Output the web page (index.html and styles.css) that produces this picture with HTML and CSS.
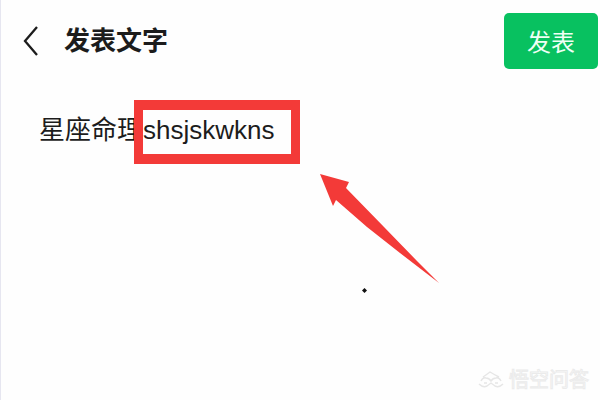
FILE: index.html
```html
<!DOCTYPE html>
<html lang="zh-CN">
<head>
<meta charset="utf-8">
<meta name="viewport" content="width=device-width, initial-scale=1">
<title>发表文字</title>
<link rel="stylesheet" href="styles.css">
</head>
<body>
<header class="bar">
  <button class="back" type="button" aria-label="返回">
    <svg width="16" height="30" viewBox="0 0 16 30" aria-hidden="true"><path d="M14 1 2 15 14 29" fill="none" stroke="#1c1c1c" stroke-width="2.3"/></svg>
  </button>
  <h1 class="title">发表文字</h1>
  <button class="publish" type="button">发表</button>
</header>
<main class="editor">
  <textarea class="text" aria-label="正文" rows="2" spellcheck="false">星座命理shsjskwkns</textarea>
  <div class="mark-box"></div>
  <svg class="mark-arrow" width="120" height="110" viewBox="0 0 120 110" aria-hidden="true"><path d="M0 0 29 8 26 14 64 53 97 87 119 109 80 79 47 53 16 26 13 32Z" fill="#f33a38"/></svg>
  <svg class="mark-dot" width="5" height="5" viewBox="0 0 5 5" aria-hidden="true"><path d="M2.5 0 5 2.5 2.5 5 0 2.5Z" fill="#111"/></svg>
</main>
<footer class="watermark">
  <svg width="26" height="20" viewBox="0 0 26 20" fill="none" stroke="#e6e6e6" stroke-width="1.4" aria-hidden="true"><path d="M5 7Q8 5 12 2Q17 5 21 7M3 11Q5 7 8 8Q11 8 13 11Q15 8 18 8Q21 7 23 11M1 14Q5 18 9 16L13 13 17 16Q21 18 25 14M6 13H9M17 13H20"/></svg>
  <span>悟空问答</span>
</footer>
</body>
</html>
```
FILE: styles.css
```css
* {
  box-sizing: border-box;
}

body {
  margin: 0;
  min-height: 100vh;
  display: flex;
  flex-direction: column;
  background: #fefefe;
  border-left: 1px solid #e6e6f0;
  color: #1c1c1c;
  font-family: "Liberation Sans", "Noto Sans CJK SC", sans-serif;
}

.bar {
  display: flex;
  align-items: center;
  padding: 13px 2px 0 22px;
}

.back {
  display: flex;
  padding: 0;
  border: 0;
  background: none;
}

.title {
  flex: 1;
  margin: 0 0 0 25px;
  font-size: 26px;
  line-height: 40px;
  font-weight: 700;
}

.publish {
  padding: 8px 23px;
  border: 0;
  border-radius: 5px;
  background: #08c160;
  color: #effff5;
  font: 24px/40px "Noto Sans CJK SC", sans-serif;
}

.editor {
  position: relative;
  flex: 1;
  padding: 41px 24px 0 38px;
}

.text {
  display: block;
  width: 100%;
  padding: 0;
  border: 0;
  outline: 0;
  resize: none;
  overflow: hidden;
  background: transparent;
  color: inherit;
  font: 26px/40px "Liberation Sans", "Noto Sans CJK SC", sans-serif;
}

.mark-box {
  position: absolute;
  left: 133px;
  top: 31px;
  width: 166px;
  height: 64px;
  border: solid #f33a38;
  border-width: 10px 9px;
}

.mark-arrow {
  position: absolute;
  left: 319px;
  top: 105px;
}

.mark-dot {
  position: absolute;
  left: 361px;
  top: 219px;
}

.watermark {
  display: flex;
  justify-content: flex-end;
  align-items: center;
  gap: 5px;
  padding: 0 11px 8px 0;
  color: #fefefe;
  font-size: 20px;
  line-height: 24px;
  -webkit-text-stroke: 1px #ebebeb;
}
```
